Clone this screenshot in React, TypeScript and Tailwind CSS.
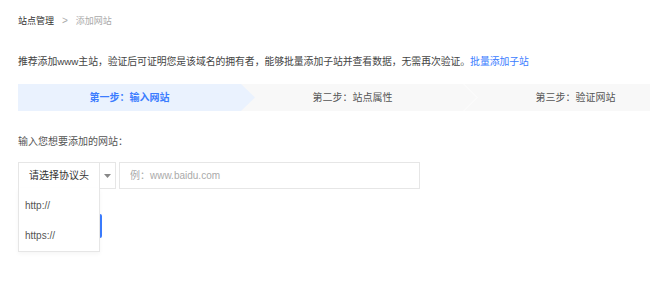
import React from 'react';

const font = "font-['Liberation_Sans','Noto_Sans_CJK_SC',sans-serif]";

export default function App() {
  const steps = ['第一步：输入网站', '第二步：站点属性', '第三步：验证网站'];

  return (
    <div className={`w-[650px] h-[291px] bg-white overflow-hidden px-[18px] ${font}`}>
      {/* breadcrumb */}
      <div className="pt-[15px] flex items-center h-[27px] text-[9px] leading-[12px]">
        <span className="text-[#333]">站点管理</span>
        <span className="mx-[8px] text-[#aaa] text-[10px]">&gt;</span>
        <span className="text-[#aaa]">添加网站</span>
      </div>

      <p className="mt-[28px] text-[9.85px] leading-[14px] text-[#444] tracking-[-0.05px]">
        推荐添加www主站，验证后可证明您是该域名的拥有者，能够批量添加子站并查看数据，无需再次验证。
        <a className="text-[#3b7cff] cursor-pointer">批量添加子站</a>
      </p>

      {/* steps */}
      <div className="mt-[15px] h-[27px] flex -mr-[60px] overflow-hidden">
        {steps.map((s, i) => (
          <div
            key={s}
            className={`relative w-[223px] shrink-0 flex items-center justify-center text-[10px] ${
              i === 0 ? 'bg-[#eaf2fe] text-[#3b7cff] font-bold z-10' : 'bg-[#f8f8f8] text-[#555]'
            }`}
          >
            {s}
            {i === 0 && (
              <svg className="absolute top-0 -right-[14px]" width="14" height="27" viewBox="0 0 14 27">
                <polygon points="0,0 14,13.5 0,27" fill="#eaf2fe" />
              </svg>
            )}
            {i === 1 && (
              <svg className="absolute top-0 -right-[14px] z-10" width="15" height="27" viewBox="0 0 15 27">
                <polyline points="0.5,0 14,13.5 0.5,27" fill="none" stroke="#fdfdfd" strokeWidth="1" />
              </svg>
            )}
          </div>
        ))}
      </div>

      <div className="mt-[24px] text-[10px] leading-[14px] text-[#555]">输入您想要添加的网站：</div>

      {/* form row */}
      <div className="mt-[13px] flex gap-[3px] h-[27px]">
        <div className="relative w-[98px] flex border border-[#e6e6e6]">
          <div className="w-[81px] flex items-center pl-[10px] text-[10px] text-[#333] border-r border-[#e6e6e6]">
            请选择协议头
          </div>
          <div className="flex-1 flex items-center justify-center">
            <svg width="7" height="4" viewBox="0 0 7 4">
              <polygon points="0,0 7,0 3.5,4" fill="#888" />
            </svg>
          </div>
          <div className="absolute left-[-1px] top-full w-[82px] h-[64px] bg-white border border-[#e6e6e6] border-t-0 shadow-[0_2px_4px_rgba(0,0,0,0.04)] z-20 text-[10px] text-[#555]">
            <div className="h-[32px] flex items-center pl-[6px] pt-[2px]">http://</div>
            <div className="h-[30px] flex items-center pl-[6px]">https://</div>
          </div>
        </div>
        <input
          className="w-[301px] border border-[#e6e6e6] px-[10px] text-[10px] text-[#333] placeholder-[#aaa] outline-none"
          placeholder="例：www.baidu.com"
        />
      </div>

      <button className="mt-[25px] w-[84px] h-[24px] bg-[#3b7cff] rounded-[2px] text-white text-[10px]">
        下一步
      </button>
    </div>
  );
}
